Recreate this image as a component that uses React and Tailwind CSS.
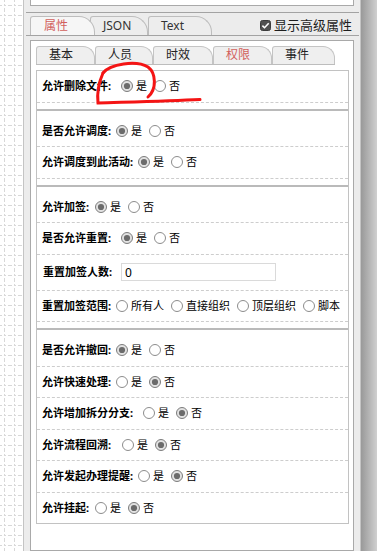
import React from "react";

const Radio = ({ checked }) => (
  <svg width="12" height="12" viewBox="0 0 12 12" className="shrink-0 block">
    <circle cx="6" cy="6" r="5.5" fill={checked ? "#e2e2e2" : "#ffffff"} stroke={checked ? "#7c7c7c" : "#8c8c8c"} />
    {checked && <circle cx="6" cy="6" r="3.1" fill="#6b6b6b" />}
  </svg>
);

const Options = ({ items, sel }) => (
  <div className="flex items-center">
    {items.map((t, i) => (
      <div key={i} className={i > 0 ? "flex items-center ml-[7px]" : "flex items-center"}>
        <Radio checked={i === sel} />
        <span className="ml-[3px] text-[11px] leading-[14px] text-black">{t}</span>
      </div>
    ))}
  </div>
);

const Row = ({ label, lw, sel, items = ["是", "否"], last }) => (
  <div
    className={
      last
        ? "flex items-center pl-[5px] h-[30.5px]"
        : "flex items-center pl-[5px] h-[31.5px] border-b border-dashed border-[#cdcdcd]"
    }
  >
    <span className={lw + " shrink-0 text-[11px] font-bold leading-[14px] text-black whitespace-nowrap"}>{label}</span>
    <Options items={items} sel={sel} />
  </div>
);

const Group = ({ children }) => (
  <div className="mt-[6px] border-t-2 border-[#bababa] pt-[5px]">{children}</div>
);

const innerTabs = [
  { t: "基本", w: "w-[59px]" },
  { t: "人员", w: "w-[58px]" },
  { t: "时效", w: "w-[60px]" },
  { t: "权限", w: "w-[59px]", active: true },
  { t: "事件", w: "w-[63px]" },
];

export default function App() {
  return (
    <div className="relative flex w-[377px] h-[551px] overflow-hidden bg-white font-['Noto_Sans','Noto_Sans_CJK_SC',sans-serif] text-black">
      {/* canvas grid */}
      <svg width="23" height="551" className="shrink-0 block">
        <defs>
          <pattern id="grid" width="10" height="10" patternUnits="userSpaceOnUse">
            <line x1="4.5" y1="0" x2="4.5" y2="10" stroke="#d8d8d8" strokeDasharray="2 2" />
            <line x1="0" y1="5.5" x2="10" y2="5.5" stroke="#d8d8d8" strokeDasharray="2 2" />
          </pattern>
        </defs>
        <rect width="23" height="551" fill="#ffffff" />
        <rect width="23" height="551" fill="url(#grid)" />
      </svg>

      {/* property panel */}
      <div className="flex flex-col w-[338px] h-full shrink-0 border-x border-[#c4c4c4] bg-[#ececec]">
        <div className="mx-[6px] h-[6px] shrink-0 bg-white border-x border-b border-[#a9a9a9]" />
        <div className="mt-[6px] ml-[2px] mr-[1px] h-px shrink-0 bg-[#a3a3a3]" />

        <div className="flex items-end h-[22px] shrink-0 pl-[6px]">
          <div className="relative z-10 h-[19px] w-[65px] pl-[13px] bg-[#f6f6f6] border-t border-x border-[#bdbdbd] rounded-tl-[3px] rounded-tr-[16px] text-[12px] leading-[17px] text-[#d2605c]">
            属性
          </div>
          <div className="relative -ml-[5px] h-[19px] w-[58px] pl-[12px] bg-[#ededed] border-t border-x border-[#bdbdbd] rounded-tl-[3px] rounded-tr-[16px] text-[12px] leading-[17px] text-[#333333]">
            JSON
          </div>
          <div className="relative h-[19px] w-[64px] pl-[12px] bg-[#ededed] border-t border-x border-[#bdbdbd] rounded-tl-[3px] rounded-tr-[16px] text-[12px] leading-[17px] text-[#333333]">
            Text
          </div>
          <div className="ml-[48px] mt-[2px] self-center flex items-center">
            <svg width="11" height="11" viewBox="0 0 11 11" className="block shrink-0">
              <rect x="0.5" y="0.5" width="10" height="10" rx="2" fill="#505050" stroke="#3c3c3c" />
              <path d="M2.4 5.6 L4.5 7.7 L8.7 3.3" stroke="#ffffff" strokeWidth="1.6" fill="none" />
            </svg>
            <span className="ml-[3px] text-[13px] leading-[16px] text-[#1e1e1e] whitespace-nowrap">显示高级属性</span>
          </div>
        </div>

        <div className="ml-[2px] mr-[1px] h-px shrink-0 bg-[#a3a3a3]" />

        <div className="mt-[4px] mx-[6px] flex-1 flex flex-col bg-white border border-[#a9a9a9] pt-[5px]">
          <div className="ml-[5px] w-[299px] flex border-b border-[#bdbdbd]">
            {innerTabs.map((tb, i) => (
              <div
                key={i}
                className={
                  tb.w +
                  " h-[18px] pl-[12px] bg-[#efefef] border-t border-x border-[#c4c4c4] rounded-tl-[3px] rounded-tr-[12px] text-[12px] leading-[16px] " +
                  (tb.active ? "text-[#d2605c]" : "text-[#222222]")
                }
              >
                {tb.t}
              </div>
            ))}
          </div>

          <div className="mt-[5px] ml-[5px] mr-[4px] border border-[#c2c2c2]">
            <Row label="允许删除文件:" lw="w-[79px]" sel={0} />

            <Group>
              <Row label="是否允许调度:" lw="w-[74px]" sel={0} />
              <Row label="允许调度到此活动:" lw="w-[96px]" sel={0} />
            </Group>

            <Group>
              <Row label="允许加签:" lw="w-[53px]" sel={0} />
              <Row label="是否允许重置:" lw="w-[79px]" sel={0} />
              <div className="flex items-center pl-[6px] h-[36px] border-b border-dashed border-[#cdcdcd]">
                <span className="w-[78px] shrink-0 text-[11px] font-bold leading-[14px] whitespace-nowrap">重置加签人数:</span>
                <input
                  readOnly
                  value="0"
                  className="w-[155px] h-[18px] border border-[#dadada] px-[3px] text-[12px] leading-[16px] text-black outline-none bg-white"
                />
              </div>
              <Row label="重置加签范围:" lw="w-[74px]" sel={-1} items={["所有人", "直接组织", "顶层组织", "脚本"]} />
            </Group>

            <Group>
              <Row label="是否允许撤回:" lw="w-[74px]" sel={0} />
              <Row label="允许快速处理:" lw="w-[74px]" sel={1} />
              <Row label="允许增加拆分分支:" lw="w-[101px]" sel={1} />
              <Row label="允许流程回溯:" lw="w-[80px]" sel={1} />
              <Row label="允许发起办理提醒:" lw="w-[96px]" sel={1} />
              <Row label="允许挂起:" lw="w-[53px]" sel={1} last />
            </Group>
          </div>
        </div>
      </div>

      {/* right shaded edge */}
      <div className="w-[16px] h-full shrink-0 bg-linear-to-r from-[#999999] to-[#d0d0d0]" />

      {/* red annotation */}
      <svg width="377" height="551" className="absolute left-0 top-0 pointer-events-none">
        <path
          d="M103 73 C110 64, 136 60, 148 67 C156 73, 157 89, 148 97"
          stroke="#f41414"
          strokeWidth="3"
          fill="none"
          strokeLinecap="round"
        />
        <path
          d="M103 73 C99 82, 97 94, 98 103 C130 102, 170 101, 200 99.5"
          stroke="#f41414"
          strokeWidth="3"
          fill="none"
          strokeLinecap="round"
        />
      </svg>
    </div>
  );
}
